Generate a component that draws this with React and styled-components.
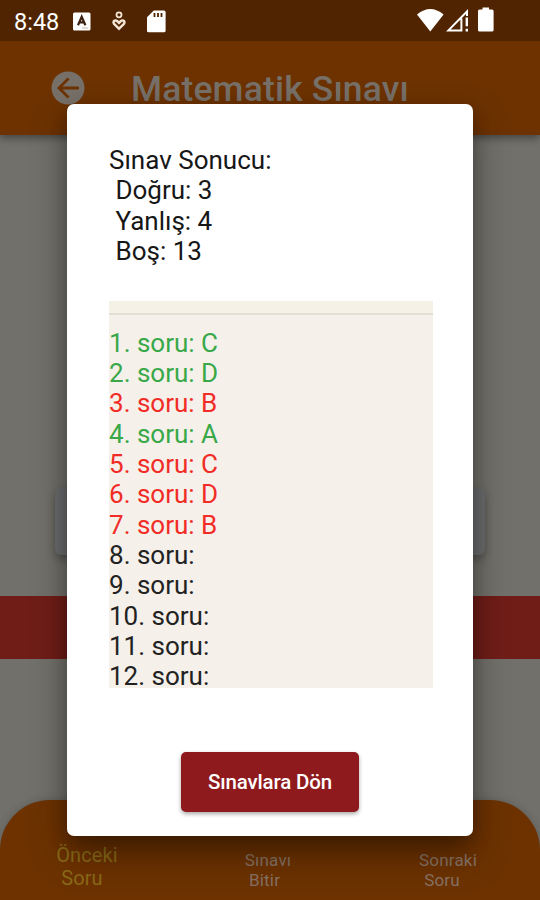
import React from "react";
import styled, { createGlobalStyle } from "styled-components";

const GlobalStyle = createGlobalStyle`
  body {
    margin: 0;
    font-family: Roboto, sans-serif;
  }
`;

const Screen = styled.div`
  position: relative;
  width: 540px;
  height: 900px;
  display: flex;
  flex-direction: column;
  background: #71706a;
  overflow: hidden;
`;

const StatusBar = styled.div`
  height: 41px;
  box-sizing: border-box;
  padding: 0 46px 0 14px;
  display: flex;
  align-items: center;
  background: #502400;
  color: white;
  z-index: 1;
`;

const Clock = styled.span`
  width: 59px;
  font-size: 23.5px;
  line-height: 27px;
  padding-top: 3px;
`;

const StatusIcon = styled.svg`
  flex: none;
  width: ${(props) => props.$w}px;
  height: 41px;
  margin-right: ${(props) => props.$gap || 0}px;
`;

const Spacer = styled.div`
  flex: 1;
`;

const AppBar = styled.div`
  height: 94px;
  box-sizing: border-box;
  padding: 0 51px;
  display: flex;
  align-items: center;
  background: #6d3200;
  color: #777069;
  box-shadow: 0 3px 8px rgba(0, 0, 0, 0.4);
`;

const BackIcon = styled.svg`
  width: 34px;
  height: 34px;
  margin-right: 46px;
`;

const Title = styled.h1`
  margin: 0;
  padding-top: 1px;
  font-size: 35.5px;
  font-weight: 500;
  line-height: 40px;
  letter-spacing: 0.15px;
  white-space: nowrap;
`;

const Question = styled.div`
  flex: 1;
  display: flex;
  flex-direction: column;
`;

const QuestionCard = styled.div`
  height: 67px;
  margin: 353px 55px 41px;
  border-radius: 6px;
  background: #6b6d6e;
  box-shadow: 0 4px 9px rgba(0, 0, 0, 0.28);
`;

const Banner = styled.div`
  height: 63px;
  background: #701d18;
`;

const BottomBar = styled.div`
  height: 100px;
  box-sizing: border-box;
  padding-top: 44px;
  display: grid;
  grid-template-columns: 174px 188px 178px;
  border-radius: 50px 50px 0 0;
  background: #6d3200;
  box-shadow: 0 0 8px rgba(0, 0, 0, 0.18);
`;

const NavItem = styled.div`
  padding-top: ${(props) => (props.$active ? 0 : 6)}px;
  padding-right: ${(props) => props.$shift || 0}px;
  font-size: ${(props) => (props.$active ? 20 : 17)}px;
  line-height: ${(props) => (props.$active ? 23 : 20)}px;
  letter-spacing: ${(props) => (props.$active ? 0.1 : 0.2)}px;
  text-align: center;
  color: ${(props) => (props.$active ? "#8a6a18" : "#877264")};
`;

const NavLine = styled.div`
  padding-right: ${(props) => props.$right || 0}px;
`;

const Dialog = styled.div`
  position: absolute;
  top: 104px;
  left: 67px;
  width: 406px;
  height: 732px;
  box-sizing: border-box;
  padding: 41px 40px 24px 42px;
  display: flex;
  flex-direction: column;
  border-radius: 7px;
  background: white;
  box-shadow: 0 18px 36px rgba(0, 0, 0, 0.36), 0 6px 18px rgba(0, 0, 0, 0.2);
  z-index: 2;
`;

const Summary = styled.div`
  font-size: 26px;
  line-height: 30.35px;
  color: #171717;
  white-space: pre;
`;

const Answers = styled.div`
  height: 387px;
  margin-top: 35px;
  background: #f6f0ea;
  overflow: hidden;
`;

const Divider = styled.div`
  height: 12px;
  margin-bottom: 12.2px;
  background: #f5f1e6;
  border-bottom: 2px solid #e2dfd6;
`;

const colors = {
  right: "#38a848",
  wrong: "#f12b26",
  empty: "#222",
};

const Answer = styled.div`
  font-size: 26px;
  line-height: 30.35px;
  color: ${(props) => colors[props.$result]};
`;

const ReturnButton = styled.button`
  align-self: center;
  width: 178px;
  height: 60px;
  margin: auto 2px 0 0;
  padding: 0;
  border: none;
  border-radius: 5px;
  background: #8f1a1d;
  box-shadow: 0 2px 4px rgba(0, 0, 0, 0.35);
  color: white;
  font-family: inherit;
  font-size: 20.5px;
  font-weight: 500;
  letter-spacing: -0.15px;
`;

const answers = [
  { choice: "C", result: "right" },
  { choice: "D", result: "right" },
  { choice: "B", result: "wrong" },
  { choice: "A", result: "right" },
  { choice: "C", result: "wrong" },
  { choice: "D", result: "wrong" },
  { choice: "B", result: "wrong" },
  { choice: "", result: "empty" },
  { choice: "", result: "empty" },
  { choice: "", result: "empty" },
  { choice: "", result: "empty" },
  { choice: "", result: "empty" },
];

const Status = () => (
  <StatusBar>
    <Clock>8:48</Clock>
    {/* keyboard */}
    <StatusIcon $w={18} $gap={21} viewBox="0 0 18 41">
      <rect x="0" y="12.5" width="17.5" height="18" rx="1.5" fill="#fff" />
      <path
        d="M5 25.2L8.7 16.8L12.4 25.2M6.4 22.4H11"
        fill="none"
        stroke="#3c2010"
        strokeWidth="2.2"
      />
      <path d="M9 28H15" stroke="#bdb0a6" strokeWidth="0.9" />
    </StatusIcon>
    {/* wellbeing heart */}
    <StatusIcon $w={16} $gap={19} viewBox="0 0 16 41">
      <circle cx="7" cy="14.8" r="2.5" fill="none" stroke="#f3e4d4" strokeWidth="1.8" />
      <path
        d="M7 30.4L1.2 24.8C-1.6 21 2.8 17 7 21C11.2 17 15.6 21 12.8 24.8Z"
        fill="#f3e4d4"
      />
      <path d="M3.2 22.2L7 25.8L10.8 22.2" fill="none" stroke="#502400" strokeWidth="1.7" />
    </StatusIcon>
    {/* sd card */}
    <StatusIcon $w={19} viewBox="0 0 19 41">
      <path
        d="M6.8 10.5H17Q18.6 10.5 18.6 12V30.7Q18.6 32.3 17 32.3H1.6Q0 32.3 0 30.7V17.3Z"
        fill="#fff"
      />
      <path d="M7.5 13V17M11 13V17M14.5 13V17" stroke="#502400" strokeWidth="1.8" />
    </StatusIcon>
    <Spacer />
    {/* wifi */}
    <StatusIcon $w={27} $gap={2} viewBox="0 0 27 41">
      <path d="M0 14.6Q13.3 3.6 26.6 14.6L13.3 31.6Z" fill="#fff" />
    </StatusIcon>
    {/* mobile signal */}
    <StatusIcon $w={23} $gap={9.5} viewBox="0 0 23 41">
      <path
        d="M15.8 30.4H2.4L21 11.5V16M15.4 18.5V31.4"
        fill="none"
        stroke="#fff"
        strokeWidth="2"
      />
      <path d="M20.8 17.5V26.2M20.8 28.8V31.4" stroke="#fff" strokeWidth="2.4" />
    </StatusIcon>
    {/* battery */}
    <StatusIcon $w={16} viewBox="0 0 16 41">
      <path
        d="M1.5 9.5H4.5V7.6H11V9.5H14Q15.6 9.5 15.6 11V30Q15.6 31.6 14 31.6H1.6Q0 31.6 0 30V11Q0 9.5 1.5 9.5Z"
        fill="#fff"
      />
    </StatusIcon>
  </StatusBar>
);

const App = () => {
  return (
    <>
      <GlobalStyle />
      <Screen>
        <Status />
        <AppBar>
          <BackIcon viewBox="0 0 34 34">
            <circle cx="17" cy="17" r="16.5" fill="#777069" />
            <path
              d="M28 17H8.5M17.5 7.5L8 17L17.5 26.5"
              fill="none"
              stroke="#6d3200"
              strokeWidth="2.8"
            />
          </BackIcon>
          <Title>Matematik Sınavı</Title>
        </AppBar>
        <Question>
          <QuestionCard />
          <Banner />
        </Question>
        <BottomBar>
          <NavItem $active>
            <NavLine>Önceki</NavLine>
            <NavLine $right={10}>Soru</NavLine>
          </NavItem>
          <NavItem>
            <NavLine>Sınavı</NavLine>
            <NavLine $right={7}>Bitir</NavLine>
          </NavItem>
          <NavItem $shift={6}>
            <NavLine>Sonraki</NavLine>
            <NavLine $right={12}>Soru</NavLine>
          </NavItem>
        </BottomBar>
        <Dialog>
          <Summary>
            <div>Sınav Sonucu:</div>
            <div> Doğru: 3</div>
            <div> Yanlış: 4</div>
            <div> Boş: 13</div>
          </Summary>
          <Answers>
            <Divider />
            {answers.map((answer, i) => (
              <Answer key={i} $result={answer.result}>
                {i + 1}. soru: {answer.choice}
              </Answer>
            ))}
          </Answers>
          <ReturnButton>Sınavlara Dön</ReturnButton>
        </Dialog>
      </Screen>
    </>
  );
};

export default App;
